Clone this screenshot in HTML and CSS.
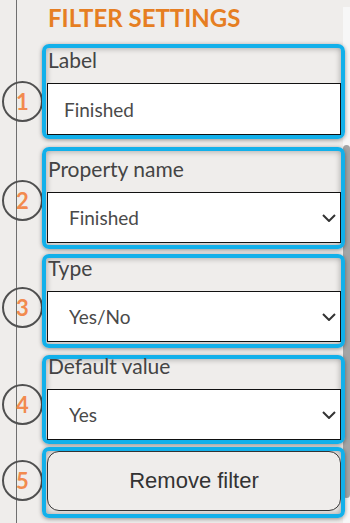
FILE: index.html
```html
<!DOCTYPE html>
<html lang="en">
<head>
    <meta charset="UTF-8">
    <meta name="viewport" content="width=device-width, initial-scale=1.0">
    <title>Filter settings</title>
    <link rel="stylesheet" href="styles.css">
</head>
<body>
    <div class="sidebar">
        <div class="settings">
            <h2 class="title">FILTER SETTINGS</h2>

            <div class="steps">
                <span class="num num-1">1</span>
                <div class="step step-1">
                    <label class="field-label" for="f-label">Label</label>
                    <input class="field" id="f-label" type="text" value="Finished">
                </div>

                <span class="num">2</span>
                <div class="step step-2">
                    <label class="field-label" for="f-prop">Property name</label>
                    <div class="select-wrap">
                        <select class="field select" id="f-prop">
                            <option>Finished</option>
                        </select>
                        <svg class="chevron" width="14" height="8" viewBox="0 0 14 8">
                            <path d="M1 1l6 6 6-6" fill="none" stroke="#333" stroke-width="2"/>
                        </svg>
                    </div>
                </div>

                <span class="num num-3">3</span>
                <div class="step step-3">
                    <label class="field-label" for="f-type">Type</label>
                    <div class="select-wrap">
                        <select class="field select" id="f-type">
                            <option>Yes/No</option>
                        </select>
                        <svg class="chevron" width="14" height="8" viewBox="0 0 14 8">
                            <path d="M1 1l6 6 6-6" fill="none" stroke="#333" stroke-width="2"/>
                        </svg>
                    </div>
                </div>

                <span class="num num-4">4</span>
                <div class="step step-4">
                    <label class="field-label" for="f-default">Default value</label>
                    <div class="select-wrap">
                        <select class="field select" id="f-default">
                            <option>Yes</option>
                        </select>
                        <svg class="chevron" width="14" height="8" viewBox="0 0 14 8">
                            <path d="M1 1l6 6 6-6" fill="none" stroke="#333" stroke-width="2"/>
                        </svg>
                    </div>
                </div>

                <span class="num num-5">5</span>
                <div class="step step-5">
                    <button class="remove-btn">Remove filter</button>
                </div>
            </div>
        </div>

        <div class="scrollbar">
            <div class="thumb"></div>
        </div>
    </div>
</body>
</html>
```

FILE: styles.css
```css
:root {
    --bg: #efedeb;
    --orange: #e67e22;
    --num-orange: #f28a4e;
    --blue: #12b0ea;
    --text: #444;
}

body {
    margin: 0;
    height: 100vh;
    overflow: hidden;
    background: var(--bg);
    font-family: Lato, "Noto Sans", sans-serif;
    color: var(--text);
}

.sidebar {
    display: flex;
    height: 100vh;
    margin-left: 16px;
    border-left: 1px solid #6f6f6f;
}

.settings {
    flex: 1;
    min-width: 0;
}

.title {
    margin: 4px 0 12px 31px;
    font-size: 24px;
    line-height: 28px;
    font-weight: 700;
    color: var(--orange);
}

/* numbered markers + outlined groups */
.steps {
    display: grid;
    grid-template-columns: 25px 1fr;
}

.num {
    align-self: center;
    width: 37px;
    height: 37px;
    margin-left: -15px;
    border: 2px solid #505050;
    border-radius: 50%;
    display: flex;
    align-items: center;
    justify-content: center;
    font-size: 22px;
    font-weight: 700;
    color: var(--num-orange);
    position: relative;
    z-index: 1;
}

.num-1 { margin-top: 12px; }
.num-3, .num-4 { margin-top: 6px; }
.num-5 { margin-bottom: 5px; }

.step {
    margin-right: -2px;
    padding: 0 0 0 1px;
    border: 4px solid var(--blue);
    border-radius: 7px;
    box-shadow: 0 1px 4px rgba(0, 0, 0, 0.4), inset 0 0 6px rgba(0, 0, 0, 0.35);
    position: relative;
    z-index: 1;
}

.step-1 { margin-bottom: 8px; }
.step-2 { margin-bottom: 5px; padding-top: 5px; padding-bottom: 2px; }
.step-3 { margin-bottom: 7px; padding-bottom: 2px; }
.step-4 { margin-bottom: 3px; }
.step-5 { padding-bottom: 3px; }

.field-label {
    display: block;
    margin: 0 0 11px 1px;
    font-size: 21px;
    line-height: 25px;
    color: var(--text);
}

.step-1 .field-label { margin-top: -1px; }
.step-3 .field-label { margin-top: -3px; }
.step-4 .field-label { margin-top: -6px; }

.field {
    display: block;
    box-sizing: border-box;
    width: 100%;
    height: 52px;
    margin: 0;
    padding: 0 16px;
    border: 1px solid #111;
    border-radius: 0;
    background: #fff;
    font-family: Lato, "Noto Sans", sans-serif;
    font-size: 19px;
    color: #4a4a4a;
    outline: none;
}

.select-wrap {
    position: relative;
}

.select {
    height: 51px;
    padding-left: 21px;
    appearance: none;
    -webkit-appearance: none;
}

.chevron {
    position: absolute;
    right: 5px;
    top: 22px;
}

.remove-btn {
    display: block;
    box-sizing: border-box;
    width: 100%;
    height: 60px;
    border: 1px solid #333;
    border-radius: 12px;
    background: var(--bg);
    font-family: "Liberation Sans", Arial, sans-serif;
    font-size: 22px;
    color: #333;
    cursor: pointer;
}

.scrollbar {
    width: 7px;
    margin-top: 7px;
    background: #f7f7f7;
}

.thumb {
    height: 353px;
    margin-top: 138px;
    background: #a4a4a4;
    border-radius: 4px;
}
```
